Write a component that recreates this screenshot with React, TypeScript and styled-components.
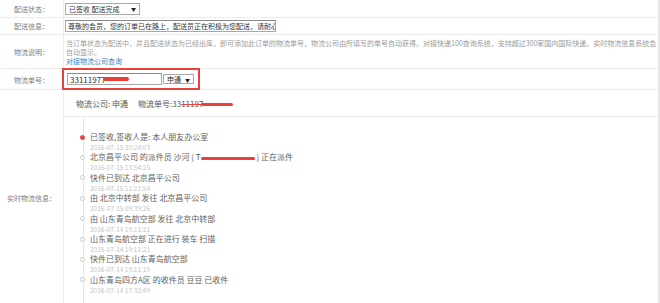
import React from 'react';
import styled, { createGlobalStyle } from 'styled-components';

// Theme colors
const colors = {
  border: '#ececec',
  label: '#808080',
  text: '#333333',
  muted: '#9a9a9a',
  item: '#5e5e5e',
  date: '#c4c4c4',
  link: '#3b7fc8',
  red: '#e8403a',
  control: '#a8a8a8',
};

const GlobalStyle = createGlobalStyle`
  html, body {
    margin: 0;
    padding: 0;
    overflow: hidden;
    background: #fff;
  }
  body {
    font-family: "Noto Sans CJK SC", "Noto Sans", sans-serif;
  }
`;

const Page = styled.div`
  width: 660px;
  box-sizing: border-box;
  border-right: 2px solid #e6e6e6;
`;

const Row = styled.div<{ $height?: number }>`
  display: grid;
  grid-template-columns: 64px 1fr;
  box-sizing: border-box;
  height: ${p => (p.$height ? `${p.$height}px` : 'auto')};
  border-bottom: 1px solid ${colors.border};
`;

const Label = styled.div`
  box-sizing: border-box;
  border-right: 1px solid ${colors.border};
  display: flex;
  align-items: center;
  justify-content: center;
  font-size: 7px;
  color: ${colors.label};
  white-space: nowrap;
`;

const Value = styled.div`
  display: flex;
  align-items: center;
  padding-left: 1px;
  min-width: 0;
`;

const FakeSelect = styled.div<{ $width: number; $height: number }>`
  box-sizing: border-box;
  width: ${p => p.$width}px;
  height: ${p => p.$height}px;
  border: 1px solid ${colors.control};
  background: #fff;
  display: flex;
  align-items: center;
  justify-content: space-between;
  padding: 0 3px 0 3px;
  font-size: 7px;
  color: ${colors.text};
  white-space: nowrap;
`;

const Arrow = styled.span`
  font-size: 5px;
  color: #222;
`;

const TextInput = styled.div<{ $width: number; $height: number; $size: number }>`
  box-sizing: border-box;
  width: ${p => p.$width}px;
  height: ${p => p.$height}px;
  border: 1px solid ${colors.control};
  border-top-color: #8a8a8a;
  padding: 0 2px;
  display: flex;
  align-items: center;
  overflow: hidden;
  white-space: nowrap;
  font-size: ${p => p.$size}px;
  color: ${colors.text};
`;

const Notes = styled.div`
  padding: 4px 0 0 1px;
  font-size: 7px;
  line-height: 9px;
  color: ${colors.muted};
  white-space: nowrap;
  align-self: flex-start;
`;

const Link = styled.span`
  color: ${colors.link};
`;

const RedFrame = styled.div`
  box-sizing: border-box;
  align-self: flex-start;
  margin: -1px 0 0 -3px;
  width: 138px;
  height: 22px;
  border: 2px solid ${colors.red};
  display: flex;
  align-items: center;
  gap: 1px;
  padding-left: 3px;
`;

const Redact = styled.span<{ $width: number; $thick: number }>`
  display: inline-block;
  width: ${p => p.$width}px;
  height: ${p => p.$thick}px;
  border-radius: 2px;
  background: ${colors.red};
  vertical-align: middle;
`;

const Struck = styled.span`
  text-decoration: line-through;
  text-decoration-color: ${colors.red};
  text-decoration-thickness: 1px;
`;

const TrackBlock = styled.div`
  display: flex;
  flex-direction: column;
  min-width: 0;
`;

const TrackHeader = styled.div`
  box-sizing: border-box;
  height: 27px;
  border-bottom: 1px solid ${colors.border};
  display: flex;
  align-items: center;
  gap: 10px;
  padding-left: 12px;
  font-size: 8px;
  color: #555;
  white-space: nowrap;
`;

const Timeline = styled.div`
  position: relative;
  padding: 15px 0 11px 0;

  &::before {
    content: '';
    position: absolute;
    left: 19px;
    top: 0;
    bottom: 0;
    width: 1px;
    background: #e6e6e6;
  }
`;

const Item = styled.div`
  position: relative;
  padding-left: 26px;
`;

const Dot = styled.span<{ $active?: boolean }>`
  position: absolute;
  left: 16px;
  top: 2.5px;
  box-sizing: border-box;
  width: 5px;
  height: 5px;
  border-radius: 50%;
  background: ${p => (p.$active ? colors.red : '#fff')};
  border: 1px solid ${p => (p.$active ? colors.red : '#c8c8c8')};
`;

const ItemTitle = styled.div`
  font-size: 8px;
  line-height: 10px;
  color: ${colors.item};
  white-space: nowrap;
`;

const ItemDate = styled.div`
  font-size: 6.5px;
  line-height: 10.4px;
  color: ${colors.date};
  white-space: nowrap;
`;

const events: { title: React.ReactNode; date: string }[] = [
  { title: '已签收,签收人是: 本人朋友办公室', date: '2016-07-15 20:24:03' },
  {
    title: (
      <>
        北京昌平公司 的派件员 沙河 ( T<Redact $width={54} $thick={3} /> ) 正在派件
      </>
    ),
    date: '2016-07-15 13:54:25',
  },
  { title: '快件已到达 北京昌平公司', date: '2016-07-15 11:21:54' },
  { title: '由 北京中转部 发往 北京昌平公司', date: '2016-07-15 09:39:26' },
  { title: '由 山东青岛航空部 发往 北京中转部', date: '2016-07-14 19:11:21' },
  { title: '山东青岛航空部 正在进行 装车 扫描', date: '2016-07-14 19:11:21' },
  { title: '快件已到达 山东青岛航空部', date: '2016-07-14 19:11:19' },
  { title: '山东青岛四方A区 的收件员 豆豆 已收件', date: '2016-07-14 17:32:49' },
];

const App: React.FC = () => {
  return (
    <Page>
      <GlobalStyle />

      <Row $height={18}>
        <Label>配送状态：</Label>
        <Value>
          <FakeSelect $width={75} $height={12}>
            已签收 配送完成 <Arrow>▼</Arrow>
          </FakeSelect>
        </Value>
      </Row>

      <Row $height={17}>
        <Label>配送信息：</Label>
        <Value>
          <TextInput $width={211} $height={12} $size={7}>
            尊敬的会员，您的订单已在路上，配送员正在积极为您配送，请耐心
          </TextInput>
        </Value>
      </Row>

      <Row $height={34}>
        <Label>物流说明：</Label>
        <Value>
          <Notes>
            当订单状态为配送中，并且配送状态为已经出库，即可添加此订单的物流单号，物流公司由所填写的单号自动获得。对接快递100查询系统，支持超过300家国内国际快递，实时物流信息系统会
            <br />
            自动显示。
            <br />
            <Link>对接物流公司查询</Link>
          </Notes>
        </Value>
      </Row>

      <Row $height={21}>
        <Label>物流单号：</Label>
        <Value>
          <RedFrame>
            <TextInput $width={95} $height={12} $size={8}>
              33111977
              <Redact $width={26} $thick={4} style={{ marginLeft: -3 }} />
            </TextInput>
            <FakeSelect $width={31} $height={10}>
              申通 <Arrow>▼</Arrow>
            </FakeSelect>
          </RedFrame>
        </Value>
      </Row>

      <Row>
        <Label>实时物流信息：</Label>
        <TrackBlock>
          <TrackHeader>
            <span>物流公司: 申通</span>
            <span>
              物流单号:33<Struck>11197</Struck>
              <Redact $width={32} $thick={3} style={{ marginLeft: -2 }} />
            </span>
          </TrackHeader>
          <Timeline>
            {events.map((ev, i) => (
              <Item key={i}>
                <Dot $active={i === 0} />
                <ItemTitle>{ev.title}</ItemTitle>
                <ItemDate>{ev.date}</ItemDate>
              </Item>
            ))}
          </Timeline>
        </TrackBlock>
      </Row>
    </Page>
  );
};

export default App;
